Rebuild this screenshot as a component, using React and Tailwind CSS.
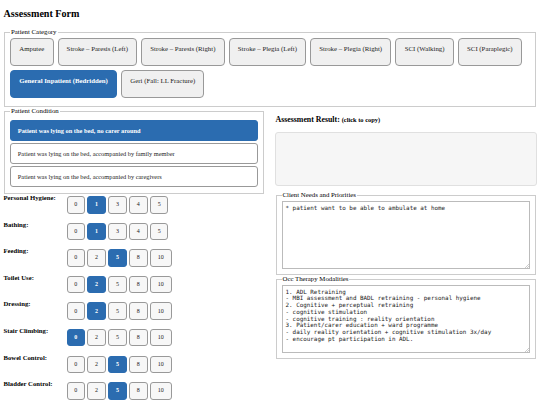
import React, { useState } from "react";
import clsx from "clsx";

const categories = [
    [
        { label: "Amputee", width: "w-[43.5px]" },
        { label: "Stroke – Paresis (Left)", width: "w-[79px]" },
        { label: "Stroke – Paresis (Right)", width: "w-[83.5px]" },
        { label: "Stroke – Plegia (Left)", width: "w-[77px]" },
        { label: "Stroke – Plegia (Right)", width: "w-[81px]" },
        { label: "SCI (Walking)", width: "w-[58.3px]" },
        { label: "SCI (Paraplegic)", width: "w-[63.5px]" },
    ],
    [
        { label: "General Inpatient (Bedridden)", width: "w-[107px]" },
        { label: "Geri (Fall: LL Fracture)", width: "w-[83px]" },
    ],
];

const conditions = [
    "Patient was lying on the bed, no carer around",
    "Patient was lying on the bed, accompanied by family member",
    "Patient was lying on the bed, accompanied by caregivers",
];

const items = [
    { name: "Personal Hygiene", scores: [0, 1, 3, 4, 5], value: 1 },
    { name: "Bathing", scores: [0, 1, 3, 4, 5], value: 1 },
    { name: "Feeding", scores: [0, 2, 5, 8, 10], value: 5 },
    { name: "Toilet Use", scores: [0, 2, 5, 8, 10], value: 2 },
    { name: "Dressing", scores: [0, 2, 5, 8, 10], value: 2 },
    { name: "Stair Climbing", scores: [0, 2, 5, 8, 10], value: 0 },
    { name: "Bowel Control", scores: [0, 2, 5, 8, 10], value: 5 },
    { name: "Bladder Control", scores: [0, 2, 5, 8, 10], value: 5 },
];

const modalities = `1. ADL Retraining
- MBI assessment and BADL retraining - personal hygiene
2. Cognitive + perceptual retraining
- cognitive stimulation
- cognitive training : reality orientation
3. Patient/carer education + ward programme
- daily reality orientation + cognitive stimulation 3x/day
- encourage pt participation in ADL.`;

const Group = ({ title, className, children }) => (
    <fieldset className={clsx("min-w-0 border border-[#cccccc] px-[5px]", className)}>
        <legend className="h-[8px] px-px text-[6.8px] leading-[8px] whitespace-nowrap">
            {title}
        </legend>
        {children}
    </fieldset>
);

const Notes = ({ defaultValue }) => (
    <div className="relative h-[68px] w-[248px]">
        <textarea
            spellCheck={false}
            defaultValue={defaultValue}
            className="block h-full w-full resize-none overflow-hidden border border-[#bbbbbb] bg-white px-[3px] py-[2.5px] font-['DejaVu_Sans_Mono',monospace] text-[5.9px] leading-[6.77px] text-[#222222] outline-none"
        />
        <svg className="absolute right-[1px] bottom-[1px] h-[4px] w-[4px]" viewBox="0 0 4 4">
            <path d="M0 4 4 0M2 4 4 2" stroke="#999" strokeWidth="0.5" />
        </svg>
    </div>
);

const ScoreRow = ({ item }) => {
    const [value, setValue] = useState(item.value);

    return (
        <div className="flex h-[26.6px] items-start">
            <span className="-ml-[0.5px] w-[63px] text-[6.7px] leading-[8px] font-bold whitespace-nowrap">
                {item.name}:
            </span>
            <div className="flex gap-[2.5px] pt-[2px]">
                {item.scores.map((score) => (
                    <button
                        key={score}
                        onClick={() => setValue(score)}
                        className={clsx(
                            "h-[17.5px] rounded-[3px] border text-[6px] leading-[15px]",
                            score === 10 ? "w-[21.5px]" : "w-[18.4px]",
                            score === value
                                ? "border-[#2b6cb0] bg-[#2b6cb0] font-bold text-white"
                                : "border-[#999999] bg-[#f7f7f7] text-[#222222]"
                        )}
                    >
                        {score}
                    </button>
                ))}
            </div>
        </div>
    );
};

export default function App() {
    const [category, setCategory] = useState("General Inpatient (Bedridden)");
    const [condition, setCondition] = useState(conditions[0]);

    return (
        <div className="h-[405px] w-[540px] overflow-hidden bg-white pl-[4px] font-['Liberation_Serif',serif] text-black">
            <h1 className="-ml-[0.5px] h-[28px] pt-[8px] text-[10.1px] leading-[12px] font-bold">Assessment Form</h1>

            <Group title="Patient Category" className="h-[79px] w-[532px]">
                <div className="flex flex-col gap-[4px] pt-[2px]">
                    {categories.map((row, i) => (
                        <div key={i} className="flex gap-[4.3px]">
                            {row.map(({ label, width }) => (
                                <button
                                    key={label}
                                    onClick={() => setCategory(label)}
                                    className={clsx(
                                        "flex h-[28px] justify-center rounded-[4px] border pt-[6px] text-[6.8px] leading-[8px] whitespace-nowrap",
                                        width,
                                        label === category
                                            ? "border-[#2b6cb0] bg-[#2b6cb0] font-bold text-white"
                                            : "border-[#999999] bg-[#f0f0f0] text-[#222222]"
                                    )}
                                >
                                    {label}
                                </button>
                            ))}
                        </div>
                    ))}
                </div>
            </Group>

            <div className="flex">
                <div className="w-[271.5px]">
                    <Group title="Patient Condition" className="h-[87px] w-[260px]">
                        <div className="flex flex-col gap-[2px] pt-[5px]">
                            {conditions.map((text) => (
                                <button
                                    key={text}
                                    onClick={() => setCondition(text)}
                                    className={clsx(
                                        "h-[21px] w-[248px] rounded-[3px] border pl-[6.8px] text-left text-[6.35px] leading-[19px] whitespace-nowrap",
                                        text === condition
                                            ? "border-[#2b6cb0] bg-[#2b6cb0] font-bold text-white"
                                            : "border-[#999999] bg-white text-[#222222]"
                                    )}
                                >
                                    {text}
                                </button>
                            ))}
                        </div>
                    </Group>
                    {items.map((item) => (
                        <ScoreRow key={item.name} item={item} />
                    ))}
                </div>

                <div className="w-[262px]">
                    <h2 className="h-[25px] pt-[8px] text-[7.85px] leading-[10px] font-bold whitespace-nowrap">
                        Assessment Result: <span className="text-[6.4px]">(click to copy)</span>
                    </h2>
                    <div className="-ml-[0.5px] h-[54px] w-[262px] rounded-[3px] border border-[#e0e0e0] bg-[#f6f6f6]" />
                    <Group title="Client Needs and Priorities" className="mt-[5px] h-[84px] w-[260px]">
                        <div className="pt-[2px]">
                            <Notes defaultValue="* patient want to be able to ambulate at home" />
                        </div>
                    </Group>
                    <Group title="Occ Therapy Modalities" className="h-[84px] w-[260px]">
                        <div className="pt-[2px]">
                            <Notes defaultValue={modalities} />
                        </div>
                    </Group>
                </div>
            </div>
        </div>
    );
}
